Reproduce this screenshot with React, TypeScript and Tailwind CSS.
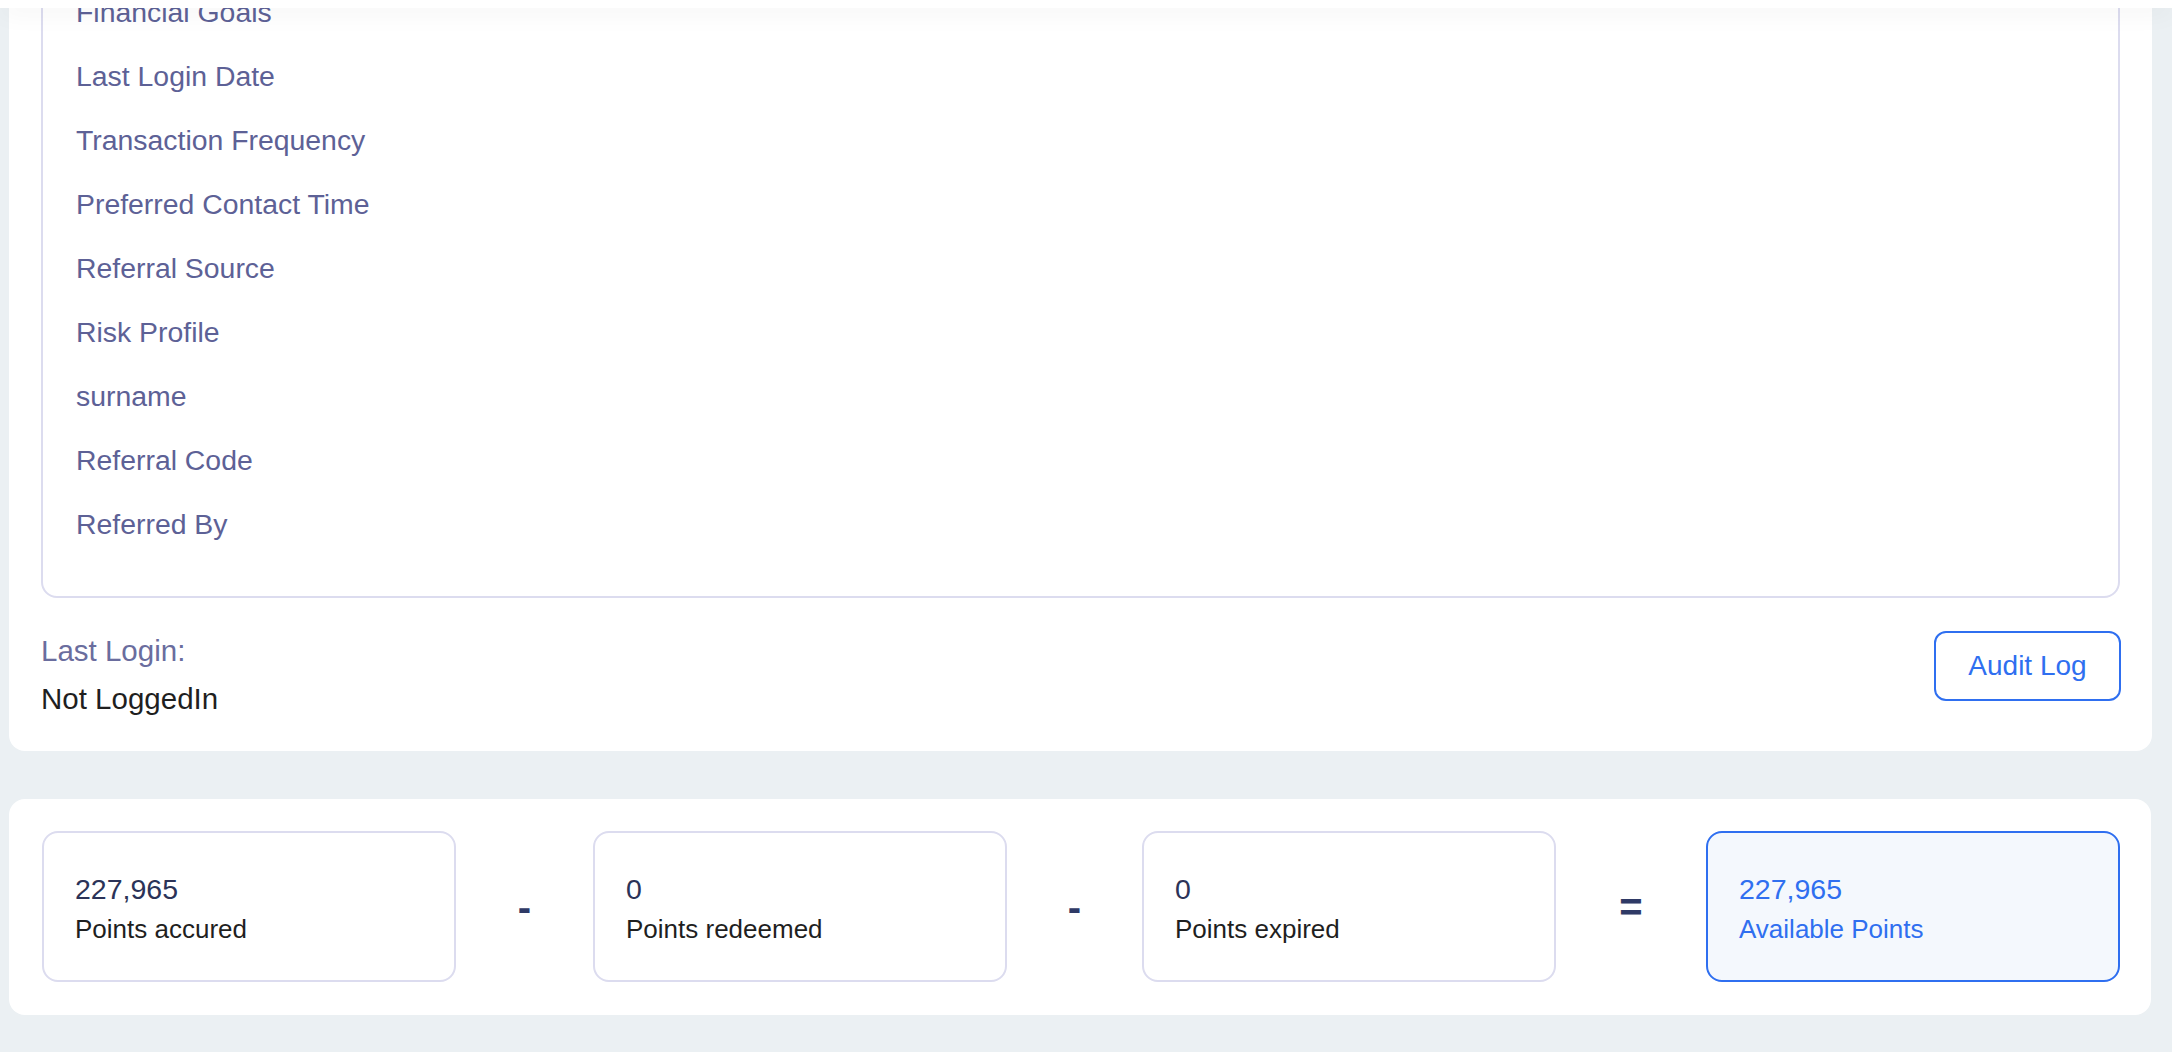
import type { ReactNode } from "react";

const profileFields = [
  "Financial Goals",
  "Last Login Date",
  "Transaction Frequency",
  "Preferred Contact Time",
  "Referral Source",
  "Risk Profile",
  "surname",
  "Referral Code",
  "Referred By",
];

function PointsBox({
  value,
  label,
  highlight = false,
}: {
  value: string;
  label: string;
  highlight?: boolean;
}) {
  return (
    <div
      className={
        highlight
          ? "h-[151px] w-[414px] shrink-0 rounded-[16px] border-2 border-[#2f6ff0] bg-[#f4f8fd] pl-[31px] pt-[36px]"
          : "h-[151px] w-[414px] shrink-0 rounded-[16px] border-2 border-[#dcdcef] bg-white pl-[31px] pt-[36px]"
      }
    >
      <p
        className={
          highlight
            ? "text-[28.5px] leading-[40px] text-[#2f6ff0]"
            : "text-[28.5px] leading-[40px] text-[#2b3358]"
        }
      >
        {value}
      </p>
      <p
        className={
          highlight
            ? "text-[26px] leading-[40px] text-[#2f6ff0]"
            : "text-[26px] leading-[40px] text-[#1f1f1f]"
        }
      >
        {label}
      </p>
    </div>
  );
}

function Operator({ className, children }: { className: string; children: ReactNode }) {
  return (
    <span
      className={`shrink-0 text-center text-[40px] font-bold leading-none text-[#2f3a66] ${className}`}
    >
      {children}
    </span>
  );
}

export default function App() {
  return (
    <div className="relative h-[1052px] overflow-hidden bg-[#ebf0f3] font-['Liberation_Sans',Arial,sans-serif]">
      <div className="absolute inset-x-0 top-0 z-10 h-[8px] bg-white shadow-[0_2px_26px_rgba(0,0,0,0.09)]" />

      <section className="ml-[9px] mr-[20px] mt-[-74px] rounded-[16px] bg-white px-[32px] pb-[32px] pt-[32px]">
        <div className="rounded-[16px] border-2 border-[#dcdcef] pb-[40px] pl-[33px] pt-[20px]">
          <ul>
            {profileFields.map((field) => (
              <li
                key={field}
                className="flex h-[64px] items-center text-[28.4px] text-[#5d6196]"
              >
                {field}
              </li>
            ))}
          </ul>
        </div>

        <div className="mt-[33px] flex items-start justify-between">
          <div>
            <p className="text-[29.5px] leading-[40px] text-[#6a6d9e]">Last Login:</p>
            <p className="mt-[8px] text-[29.5px] leading-[40px] text-[#1f1f1f]">Not LoggedIn</p>
          </div>
          <button
            type="button"
            className="mr-[-1px] h-[70px] w-[187px] rounded-[12px] border-2 border-[#2f6ff0] text-[28px] text-[#2f6ff0]"
          >
            Audit Log
          </button>
        </div>
      </section>

      <section className="ml-[9px] mr-[21px] mt-[48px] flex items-center rounded-[16px] bg-white pb-[33px] pl-[33px] pt-[32px]">
        <PointsBox value="227,965" label="Points accured" />
        <Operator className="w-[137px]">-</Operator>
        <PointsBox value="0" label="Points redeemed" />
        <Operator className="w-[135px]">-</Operator>
        <PointsBox value="0" label="Points expired" />
        <Operator className="w-[150px]">=</Operator>
        <PointsBox value="227,965" label="Available Points" highlight />
      </section>
    </div>
  );
}
